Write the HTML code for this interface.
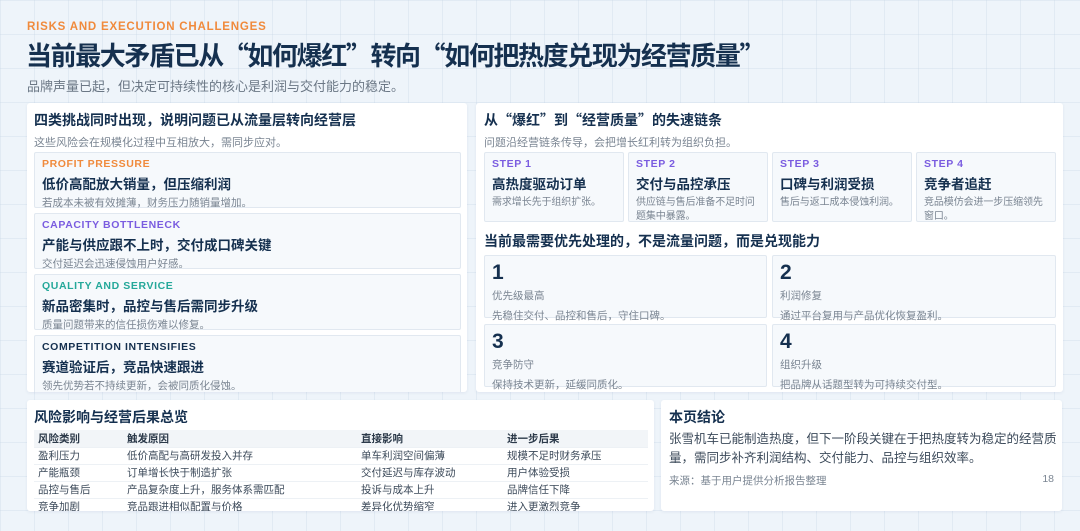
<!DOCTYPE html><html><head><meta charset="utf-8"><style>
*{margin:0;padding:0;box-sizing:border-box}
body{width:1080px;height:531px;overflow:hidden;font-family:"Liberation Sans","Noto Sans CJK SC",sans-serif;background:#eef4fa;background-image:linear-gradient(rgba(200,215,230,.35) 1px,transparent 1px),linear-gradient(90deg,rgba(200,215,230,.35) 1px,transparent 1px);background-size:34px 34px;position:relative;color:#14304f}
.a{position:absolute}
.q{font-family:"Noto Sans CJK SC",sans-serif}
.eb{left:27px;top:21px;font-size:11.5px;font-weight:700;color:#f08a3c;letter-spacing:.8px}
.t{left:26px;top:36px;font-size:26px;font-weight:700;color:#15304f;white-space:nowrap;letter-spacing:-1.4px}
.st{left:27px;top:76px;font-size:13px;color:#6b7785}
.p{background:#fff;border-radius:3px;box-shadow:0 1px 3px rgba(40,70,110,.08)}
.h{font-size:14px;font-weight:700;color:#15304f;white-space:nowrap}
.s{font-size:11px;color:#7a8592;white-space:nowrap}
.c{background:#f6f9fc;border:1px solid #e1e8f0;border-radius:2px}
.lab{font-size:10.5px;font-weight:700;letter-spacing:.6px}
.ct{font-size:13.5px;font-weight:700;color:#15304f;margin-top:3px}
.cd{font-size:10.5px;color:#7a8592;margin-top:3px;line-height:14px}
.sc .cd{font-size:10px;letter-spacing:-.1px}
.num{font-size:21px;font-weight:700;color:#15304f;line-height:24px}
table{border-collapse:collapse;font-size:10.5px;color:#3c4a5a}
td,th{height:17px;text-align:left;padding-left:4px;border-bottom:1px solid #edf1f5}
th{font-weight:700;background:#f2f5f8;color:#2c3a4a}
</style></head><body>
<div class="a eb">RISKS AND EXECUTION CHALLENGES</div>
<div class="a t">当前最大矛盾已从<span class="q">“</span>如何爆红<span class="q">”</span>转向<span class="q">“</span>如何把热度兑现为经营质量<span class="q">”</span></div>
<div class="a st">品牌声量已起，但决定可持续性的核心是利润与交付能力的稳定。</div>

<div class="a p" style="left:27px;top:103px;width:440px;height:289px;overflow:hidden">
<div class="a h" style="left:7px;top:7px">四类挑战同时出现，说明问题已从流量层转向经营层</div>
<div class="a s" style="left:7px;top:31px">这些风险会在规模化过程中互相放大，需同步应对。</div>
<div class="a c" style="left:7px;top:49px;width:427px;height:56px;padding:5px 7px"><div class="lab" style="color:#f08a3c">PROFIT PRESSURE</div><div class="ct">低价高配放大销量，但压缩利润</div><div class="cd">若成本未被有效摊薄，财务压力随销量增加。</div></div>
<div class="a c" style="left:7px;top:110px;width:427px;height:56px;padding:5px 7px"><div class="lab" style="color:#7a5ce0">CAPACITY BOTTLENECK</div><div class="ct">产能与供应跟不上时，交付成口碑关键</div><div class="cd">交付延迟会迅速侵蚀用户好感。</div></div>
<div class="a c" style="left:7px;top:171px;width:427px;height:56px;padding:5px 7px"><div class="lab" style="color:#25a89a">QUALITY AND SERVICE</div><div class="ct">新品密集时，品控与售后需同步升级</div><div class="cd">质量问题带来的信任损伤难以修复。</div></div>
<div class="a c" style="left:7px;top:232px;width:427px;height:60px;padding:5px 7px"><div class="lab" style="color:#15304f">COMPETITION INTENSIFIES</div><div class="ct">赛道验证后，竞品快速跟进</div><div class="cd">领先优势若不持续更新，会被同质化侵蚀。</div></div>
</div>

<div class="a p" style="left:476px;top:103px;width:587px;height:289px">
<div class="a h" style="left:8px;top:7px">从<span class="q">“</span>爆红<span class="q">”</span>到<span class="q">“</span>经营质量<span class="q">”</span>的失速链条</div>
<div class="a s" style="left:8px;top:31px">问题沿经营链条传导，会把增长红利转为组织负担。</div>
<div class="a c sc" style="left:8px;top:49px;width:140px;height:70px;padding:5px 7px"><div class="lab" style="color:#7a5ce0">STEP 1</div><div class="ct">高热度驱动订单</div><div class="cd">需求增长先于组织扩张。</div></div>
<div class="a c sc" style="left:152px;top:49px;width:140px;height:70px;padding:5px 7px"><div class="lab" style="color:#7a5ce0">STEP 2</div><div class="ct">交付与品控承压</div><div class="cd">供应链与售后准备不足时问题集中暴露。</div></div>
<div class="a c sc" style="left:296px;top:49px;width:140px;height:70px;padding:5px 7px"><div class="lab" style="color:#7a5ce0">STEP 3</div><div class="ct">口碑与利润受损</div><div class="cd">售后与返工成本侵蚀利润。</div></div>
<div class="a c sc" style="left:440px;top:49px;width:140px;height:70px;padding:5px 7px"><div class="lab" style="color:#7a5ce0">STEP 4</div><div class="ct">竞争者追赶</div><div class="cd">竞品模仿会进一步压缩领先窗口。</div></div>
<div class="a h" style="left:8px;top:128px">当前最需要优先处理的，不是流量问题，而是兑现能力</div>
<div class="a c" style="left:8px;top:152px;width:283px;height:63px;padding:5px 7px"><div class="num">1</div><div class="cd" style="margin-top:4px">优先级最高</div><div class="cd" style="margin-top:6px">先稳住交付、品控和售后，守住口碑。</div></div>
<div class="a c" style="left:296px;top:152px;width:284px;height:63px;padding:5px 7px"><div class="num">2</div><div class="cd" style="margin-top:4px">利润修复</div><div class="cd" style="margin-top:6px">通过平台复用与产品优化恢复盈利。</div></div>
<div class="a c" style="left:8px;top:221px;width:283px;height:63px;padding:5px 7px"><div class="num">3</div><div class="cd" style="margin-top:4px">竞争防守</div><div class="cd" style="margin-top:6px">保持技术更新，延缓同质化。</div></div>
<div class="a c" style="left:296px;top:221px;width:284px;height:63px;padding:5px 7px"><div class="num">4</div><div class="cd" style="margin-top:4px">组织升级</div><div class="cd" style="margin-top:6px">把品牌从话题型转为可持续交付型。</div></div>
</div>

<div class="a p" style="left:27px;top:400px;width:627px;height:111px;overflow:hidden">
<div class="a h" style="left:7px;top:7px">风险影响与经营后果总览</div>
<table class="a" style="left:7px;top:30px;width:614px">
<tr><th style="width:89px">风险类别</th><th style="width:234px">触发原因</th><th style="width:146px">直接影响</th><th>进一步后果</th></tr>
<tr><td>盈利压力</td><td>低价高配与高研发投入并存</td><td>单车利润空间偏薄</td><td>规模不足时财务承压</td></tr>
<tr><td>产能瓶颈</td><td>订单增长快于制造扩张</td><td>交付延迟与库存波动</td><td>用户体验受损</td></tr>
<tr><td>品控与售后</td><td>产品复杂度上升，服务体系需匹配</td><td>投诉与成本上升</td><td>品牌信任下降</td></tr>
<tr><td>竞争加剧</td><td>竞品跟进相似配置与价格</td><td>差异化优势缩窄</td><td>进入更激烈竞争</td></tr>
</table></div>

<div class="a p" style="left:661px;top:400px;width:401px;height:111px">
<div class="a h" style="left:8px;top:7px">本页结论</div>
<div class="a" style="left:8px;top:30px;width:390px;font-size:12.5px;line-height:19px;color:#3c4a5a">张雪机车已能制造热度，但下一阶段关键在于把热度转为稳定的经营质量，需同步补齐利润结构、交付能力、品控与组织效率。</div>
<div class="a s" style="left:8px;top:73px;font-size:10.5px">来源：基于用户提供分析报告整理</div>
<div class="a s" style="right:8px;top:73px;font-size:10.5px">18</div>
</div>
</body></html>
